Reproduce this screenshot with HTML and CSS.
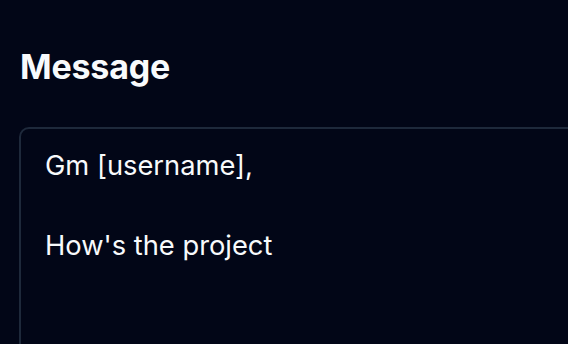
FILE: index.html
```html
<!DOCTYPE html>
<html>
<head>
<meta charset="utf-8">
<link rel="stylesheet" href="styles.css">
</head>
<body>
<div class="page">
  <h2 class="title">Message</h2>
  <div class="box">
    <p class="line">Gm [username],</p>
    <p class="line blank">&nbsp;</p>
    <p class="line">How's the project</p>
  </div>
</div>
</body>
</html>
```
FILE: styles.css
```css
html, body {
  margin: 0;
  padding: 0;
  background: #020617;
  overflow: hidden;
  width: 568px;
  height: 344px;
}
.page {
  padding: 47px 0 0 20px;
  font-family: Inter, "Noto Sans", sans-serif;
  color: #f8fafc;
}
.title {
  margin: 0;
  font-size: 34px;
  font-weight: 700;
  line-height: 40px;
  letter-spacing: -0.2px;
}
.box {
  margin-top: 40px;
  margin-left: -1px;
  width: 700px;
  height: 400px;
  border: 2px solid #1e293b;
  border-radius: 10px;
  padding: 17px 24px;
  box-sizing: border-box;
}
.line {
  margin: 0;
  font-size: 27.3px;
  line-height: 40px;
}
```
